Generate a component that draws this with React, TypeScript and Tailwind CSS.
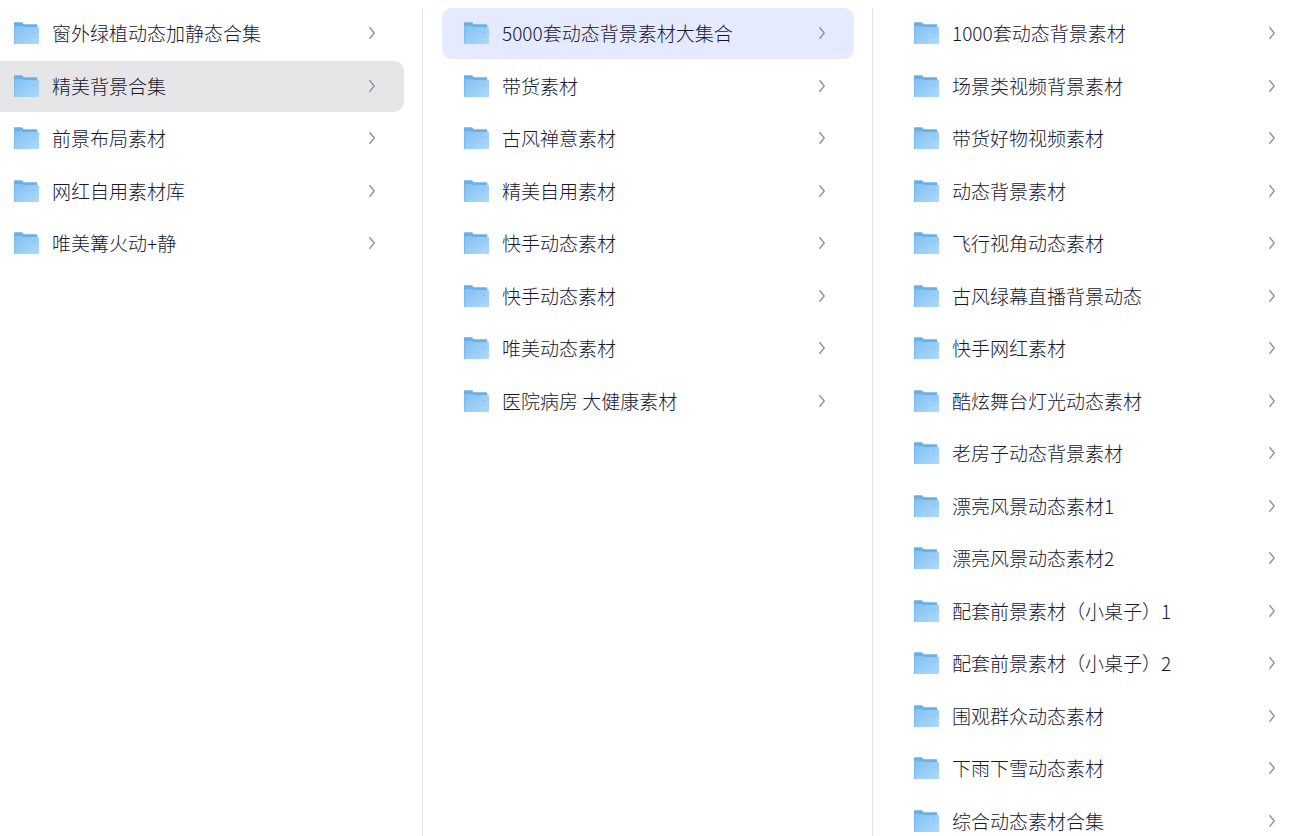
import { useState } from "react";

const columns: { label: string; folders: string[]; initial: number }[] = [
  {
    label: "合集",
    folders: ["窗外绿植动态加静态合集", "精美背景合集", "前景布局素材", "网红自用素材库", "唯美篝火动+静"],
    initial: 1,
  },
  {
    label: "精美背景合集",
    folders: [
      "5000套动态背景素材大集合",
      "带货素材",
      "古风禅意素材",
      "精美自用素材",
      "快手动态素材",
      "快手动态素材",
      "唯美动态素材",
      "医院病房 大健康素材",
    ],
    initial: 0,
  },
  {
    label: "5000套动态背景素材大集合",
    folders: [
      "1000套动态背景素材",
      "场景类视频背景素材",
      "带货好物视频素材",
      "动态背景素材",
      "飞行视角动态素材",
      "古风绿幕直播背景动态",
      "快手网红素材",
      "酷炫舞台灯光动态素材",
      "老房子动态背景素材",
      "漂亮风景动态素材1",
      "漂亮风景动态素材2",
      "配套前景素材（小桌子）1",
      "配套前景素材（小桌子）2",
      "围观群众动态素材",
      "下雨下雪动态素材",
      "综合动态素材合集",
    ],
    initial: -1,
  },
];

const columnStyles = ["border-r pr-[18px]", "border-r pl-[19px] pr-[18px]", "pl-[19px]"];
const rowStyles = ["rounded-r-[10px] pl-[14px] pr-7", "rounded-[10px] pl-[22px] pr-7", "rounded-l-[10px] pl-[22px] pr-[25px]"];
const selectedStyles = ["bg-[#e6e6e8]", "bg-[#e6eaff]", "bg-[#e6eaff]"];

function FolderIcon() {
  return (
    <svg className="h-[22px] w-[25px] shrink-0" viewBox="0 0 25 22" aria-hidden="true">
      <path d="M0 1Q0 .3 .7 .3H7.6Q8.4 .3 8.8 1L9.5 2.2H22.3Q23.3 2.2 23.3 3.2V10H0Z" fill="#68b0e6" />
      <path d="M0 4H8L9.4 5H24Q25 5 25 6V21.4Q25 22 24.4 22H.6Q0 22 0 21.4Z" fill="url(#folder-front)" />
      <path d="M.5 2V22" stroke="#6cb1e8" strokeOpacity=".6" />
      <path d="M18 10.5H22" stroke="#74b4eb" strokeOpacity=".4" />
    </svg>
  );
}

function Chevron() {
  return (
    <svg className="h-[14px] w-2 shrink-0" viewBox="0 0 8 14" fill="none" aria-hidden="true">
      <path d="M1.5 1.2L6.2 7L1.5 12.8" stroke="#929299" strokeWidth="1.4" />
    </svg>
  );
}

function Column({ index }: { index: number }) {
  const { label, folders, initial } = columns[index];
  const [selected, setSelected] = useState(initial);
  return (
    <nav
      aria-label={label}
      className={`min-h-0 min-w-0 overflow-y-auto border-[#e6e6e9] [scrollbar-width:none] ${columnStyles[index]}`}
    >
      <ul className="flex flex-col gap-px">
        {folders.map((name, i) => (
          <li key={i} className="odd:mb-px">
            <button
              type="button"
              onClick={() => setSelected(i)}
              aria-current={selected === i}
              className={`flex h-[51px] w-full items-center pb-px text-left ${rowStyles[index]} ${
                selected === i ? selectedStyles[index] : ""
              }`}
            >
              <FolderIcon />
              <span className="ml-[13px] min-w-0 flex-1 truncate">{name}</span>
              <Chevron />
            </button>
          </li>
        ))}
      </ul>
    </nav>
  );
}

export default function App() {
  return (
    <main className="grid h-screen grid-cols-[423fr_450fr_428fr] grid-rows-[minmax(0,1fr)] overflow-hidden bg-white pt-2 font-['Noto_Sans_CJK_SC',sans-serif] text-[19px] leading-7 font-light text-[#17172f]">
      <svg className="absolute size-0" aria-hidden="true">
        <defs>
          <linearGradient id="folder-front" x1="0" y1="0" x2="1" y2="1">
            <stop offset="0" stopColor="#82bff0" />
            <stop offset="1" stopColor="#addafc" />
          </linearGradient>
        </defs>
      </svg>
      <Column index={0} />
      <Column index={1} />
      <Column index={2} />
    </main>
  );
}
